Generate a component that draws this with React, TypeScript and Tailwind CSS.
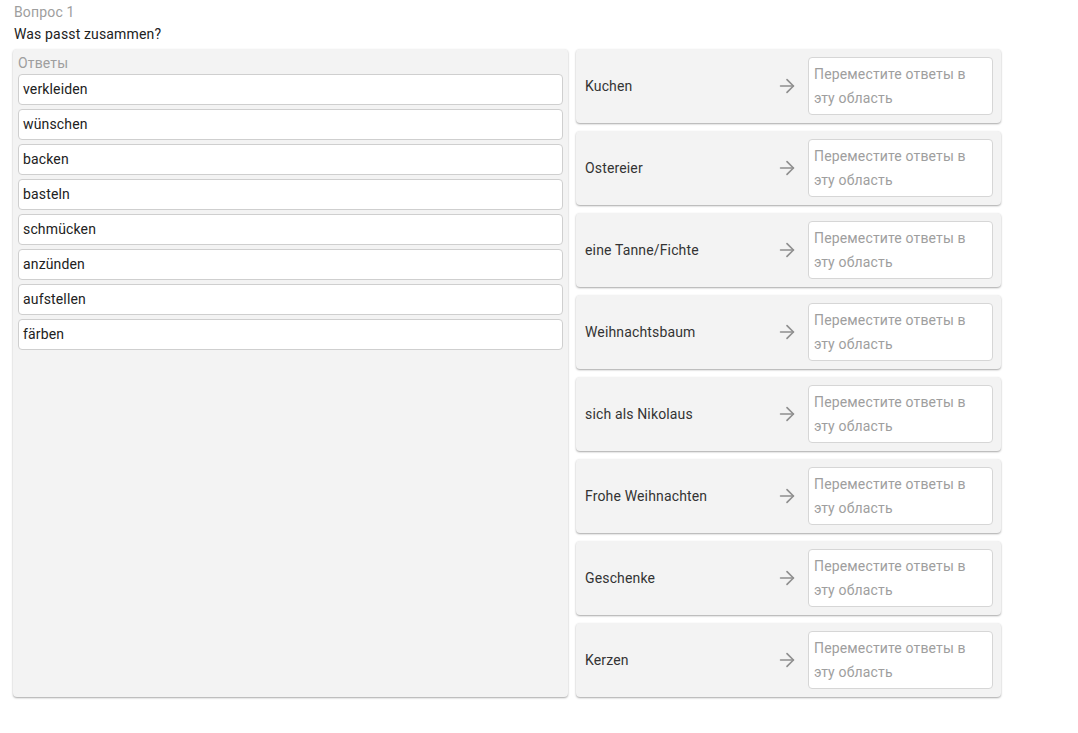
import React from "react";
import { ArrowRight } from "lucide-react";

const answers = [
  "verkleiden",
  "wünschen",
  "backen",
  "basteln",
  "schmücken",
  "anzünden",
  "aufstellen",
  "färben",
];

const targets = [
  "Kuchen",
  "Ostereier",
  "eine Tanne/Fichte",
  "Weihnachtsbaum",
  "sich als Nikolaus",
  "Frohe Weihnachten",
  "Geschenke",
  "Kerzen",
];

export default function App() {
  return (
    <div
      className="min-h-[733px] bg-white pl-[13px] pt-px text-[14px] tracking-[0.15px] text-[#212121]"
      style={{ fontFamily: "Roboto, 'Noto Sans', sans-serif" }}
    >
      <div className="pl-px leading-[22px] text-[#9e9e9e]">Вопрос 1</div>
      <div className="pl-px leading-[22px]">Was passt zusammen?</div>

      <div className="mt-[4px] flex items-stretch gap-[8px]">
        {/* answer pool */}
        <div className="w-[555px] rounded-[4px] bg-[#f3f3f3] px-[5px] pt-[4px] shadow-[0_1px_2px_rgba(0,0,0,0.35)]">
          <div className="mb-px h-[20px] leading-[20px] text-[#9e9e9e]">Ответы</div>
          <div className="flex flex-col gap-[4px]">
            {answers.map((a) => (
              <div
                key={a}
                className="h-[31px] rounded-[4px] border border-[#cfcfcf] bg-white px-[4px] leading-[29px]"
              >
                {a}
              </div>
            ))}
          </div>
        </div>

        {/* matching targets */}
        <div className="flex w-[425px] flex-col gap-[8px]">
          {targets.map((t) => (
            <div
              key={t}
              className="flex h-[74px] items-center rounded-[4px] bg-[#f3f3f3] py-[8px] pl-[9px] pr-[8px] shadow-[0_1px_2px_rgba(0,0,0,0.35)]"
            >
              <div className="flex-1 text-[#333333]">{t}</div>
              <ArrowRight size={22} strokeWidth={1.8} className="mr-[10px] text-[#8f8f8f]" />
              <div className="h-[58px] w-[185px] rounded-[4px] border border-[#d6d6d6] bg-white py-[4px] pl-[5px] pr-[18px] leading-[24px] text-[#9e9e9e]">
                Переместите ответы в эту область
              </div>
            </div>
          ))}
        </div>
      </div>
    </div>
  );
}
